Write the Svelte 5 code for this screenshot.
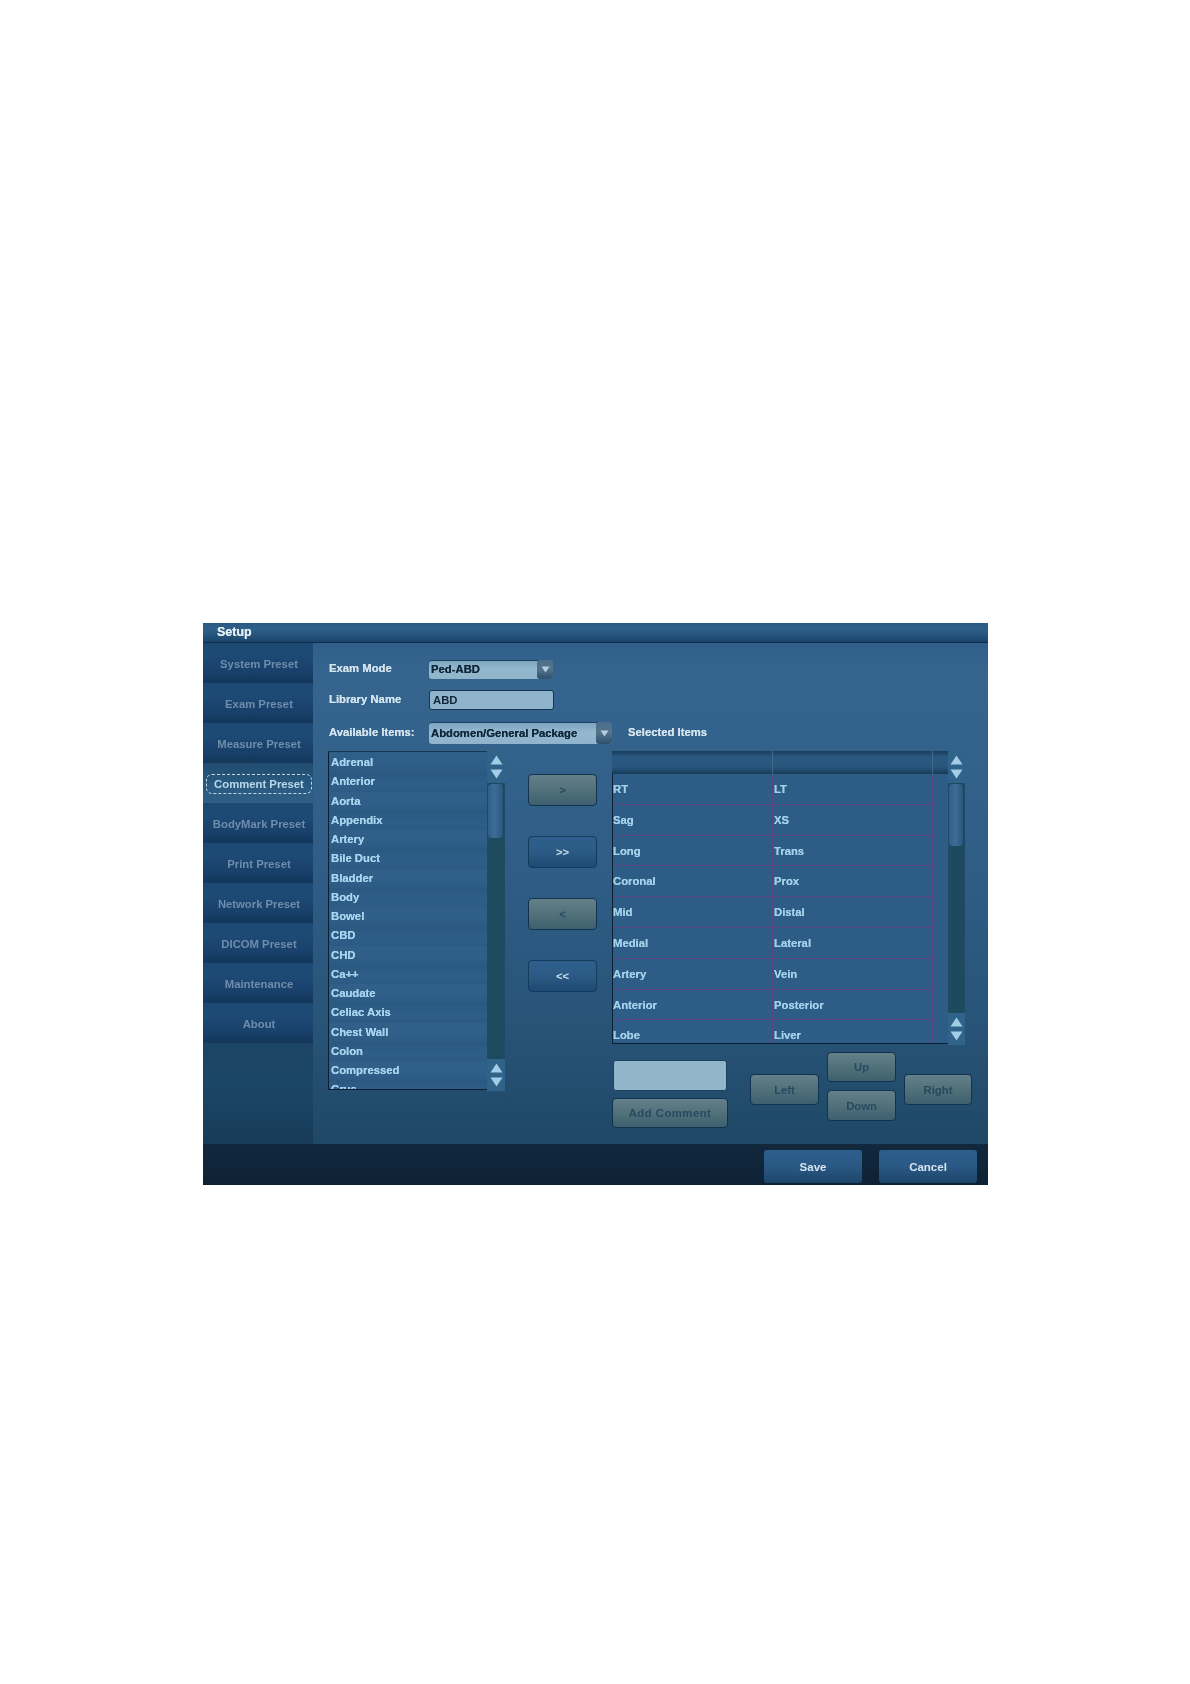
<script lang="ts">
  const NAV = [
    'System Preset',
    'Exam Preset',
    'Measure Preset',
    'Comment Preset',
    'BodyMark Preset',
    'Print Preset',
    'Network Preset',
    'DICOM Preset',
    'Maintenance',
    'About'
  ];

  const AVAILABLE = [
    'Adrenal', 'Anterior', 'Aorta', 'Appendix', 'Artery', 'Bile Duct', 'Bladder', 'Body', 'Bowel',
    'CBD', 'CHD', 'Ca++', 'Caudate', 'Celiac Axis', 'Chest Wall', 'Colon', 'Compressed', 'Crus'
  ];

  const SELECTED = [
    ['RT', 'LT'],
    ['Sag', 'XS'],
    ['Long', 'Trans'],
    ['Coronal', 'Prox'],
    ['Mid', 'Distal'],
    ['Medial', 'Lateral'],
    ['Artery', 'Vein'],
    ['Anterior', 'Posterior'],
    ['Lobe', 'Liver']
  ];

  const TRANSFER = [
    { label: '>', enabled: false },
    { label: '>>', enabled: true },
    { label: '<', enabled: false },
    { label: '<<', enabled: true }
  ];

  let active = $state('Comment Preset');
</script>

{#snippet arrows()}
  <div class="sb-btn">
    <svg width="13" height="10" viewBox="0 0 13 10"><path d="M6.5 .5 L12.5 9.5 H.5 Z" /></svg>
    <svg width="13" height="10" viewBox="0 0 13 10"><path d="M.5 .5 H12.5 L6.5 9.5 Z" /></svg>
  </div>
{/snippet}

{#snippet scrollbar(thumb: number)}
  <div class="scrollbar">
    {@render arrows()}
    <div class="track">
      <div class="thumb" style="height: {thumb}px"></div>
    </div>
    {@render arrows()}
  </div>
{/snippet}

{#snippet comboArrow()}
  <span class="combo-arrow">
    <svg width="9" height="7" viewBox="0 0 9 7"><path d="M.5 .5 H8.5 L4.5 6.5 Z" /></svg>
  </span>
{/snippet}

<div class="setup">
  <div class="titlebar">Setup</div>

  <div class="body">
    <nav class="sidebar">
      {#each NAV as item}
        <button type="button" class="nav-item" class:active={active === item} onclick={() => (active = item)}>
          <span>{item}</span>
        </button>
      {/each}
    </nav>

    <div class="main">
      <div class="row row-exam">
        <span class="label">Exam Mode</span>
        <div class="combo combo-small">
          <span class="combo-text">Ped-ABD</span>
          {@render comboArrow()}
        </div>
      </div>

      <div class="row row-library">
        <span class="label">Library Name</span>
        <input class="field" value="ABD" />
      </div>

      <div class="row row-items">
        <span class="label">Available Items:</span>
        <div class="combo combo-wide">
          <span class="combo-text">Abdomen/General Package</span>
          {@render comboArrow()}
        </div>
        <span class="label selected-label">Selected Items</span>
      </div>

      <div class="workspace">
        <div class="available">
          <ul class="list">
            {#each AVAILABLE as item}
              <li>{item}</li>
            {/each}
          </ul>
          {@render scrollbar(54)}
        </div>

        <div class="transfer">
          {#each TRANSFER as btn}
            <button type="button" class="btn" class:off={!btn.enabled}>{btn.label}</button>
          {/each}
        </div>

        <div class="right">
          <div class="selected">
            <div class="table">
              <div class="thead">
                <span></span>
                <span></span>
                <span></span>
              </div>
              <div class="tbody">
                {#each SELECTED as [a, b]}
                  <div class="tr">
                    <span>{a}</span>
                    <span>{b}</span>
                  </div>
                {/each}
              </div>
            </div>
            {@render scrollbar(62)}
          </div>

          <div class="controls">
            <div class="comment">
              <input class="comment-input" />
              <button type="button" class="btn off add">Add Comment</button>
            </div>
            <div class="pad">
              <button type="button" class="btn off pad-left">Left</button>
              <button type="button" class="btn off pad-up">Up</button>
              <button type="button" class="btn off pad-down">Down</button>
              <button type="button" class="btn off pad-right">Right</button>
            </div>
          </div>
        </div>
      </div>
    </div>
  </div>

  <div class="footer">
    <button type="button" class="btn foot save">Save</button>
    <button type="button" class="btn foot cancel">Cancel</button>
  </div>
</div>

<style>
  :global(body) {
    background: #fff;
  }

  .setup {
    width: 785px;
    height: 562px;
    margin: 623px 0 0 203px;
    display: flex;
    flex-direction: column;
    font-family: 'Liberation Sans', Arial, sans-serif;
    font-size: 11.3px;
    font-weight: 700;
    text-shadow: 0 0 0.5px currentColor;
    filter: blur(0.4px);
  }

  .titlebar {
    height: 19px;
    padding-left: 14px;
    line-height: 18px;
    font-size: 12.5px;
    color: #e6eff5;
    background: linear-gradient(#2a5b85, #2e5f88 35%, #214e75 80%, #1b4468);
    border-bottom: 1px solid #102c47;
    flex: none;
  }

  .body {
    display: flex;
    flex: 1;
    min-height: 0;
  }

  .sidebar {
    width: 110px;
    flex: none;
    display: flex;
    flex-direction: column;
    background: linear-gradient(#173b60, #1a4163 70%, #1c4666 88%, #173b59);
  }

  .nav-item {
    height: 40px;
    flex: none;
    padding: 2px 1px 0 3px;
    border: 0;
    background: linear-gradient(#1c4874, #1e4a76 30%, #18406a 72%, #14375a);
    color: #6f8dab;
    font: inherit;
    cursor: pointer;
    display: flex;
    align-items: center;
    justify-content: center;
  }

  .nav-item span {
    width: 100%;
    height: 20px;
    line-height: 18px;
    border: 1px dashed transparent;
    border-radius: 6px;
    box-sizing: border-box;
  }

  .nav-item.active {
    background: linear-gradient(#1f4c70, #2a5a80 55%, #2f5f85);
    color: #bcd8ea;
  }

  .nav-item.active span {
    border-color: #c2d8e6;
  }

  .main {
    flex: 1;
    padding: 17px 0 0 15px;
    background: linear-gradient(#2f5f8a, #35658f 6%, #2f5d86 45%, #285478 75%, #1f4866);
    color: #d5e5ee;
  }

  .row {
    display: flex;
    align-items: center;
  }

  .row-exam {
    height: 19px;
  }

  .row-library {
    height: 20px;
    margin-top: 11px;
  }

  .row-items {
    height: 22px;
    margin-top: 12px;
  }

  .label {
    width: 100px;
    padding: 0 0 3px 1px;
    box-sizing: border-box;
    flex: none;
  }

  .selected-label {
    width: auto;
    margin-left: 16px;
    padding: 0 0 2px;
  }

  .combo {
    height: 100%;
    margin-left: 1px;
    display: flex;
    align-items: center;
    justify-content: space-between;
    padding-left: 2px;
    box-sizing: border-box;
    color: #10273a;
    background: linear-gradient(#7ea5bf, #94b9cf 45%, #8fb4cb);
    border-top: 1px solid #1a3f60;
    border-radius: 3px;
  }

  .combo-text {
    padding-bottom: 2px;
  }

  .combo-small {
    width: 124px;
  }

  .combo-wide {
    width: 183px;
  }

  .combo-arrow {
    width: 16px;
    align-self: stretch;
    margin-top: -1px;
    display: flex;
    align-items: center;
    justify-content: center;
    background: linear-gradient(#4b6f8c, #54738b 50%, #2c4f6c);
    border-radius: 3px;
  }

  .combo-arrow path {
    fill: #b4d0e0;
  }

  .field {
    width: 125px;
    height: 100%;
    margin: 0 0 0 1px;
    padding: 0 3px 1px;
    box-sizing: border-box;
    font: inherit;
    color: #10273a;
    background: #8fb4cb;
    border: 1px solid #133455;
    border-radius: 3px;
    outline: none;
  }

  .workspace {
    display: flex;
    align-items: flex-start;
    margin-top: 7px;
  }

  .available {
    display: flex;
    width: 177px;
    height: 340px;
    flex: none;
  }

  .list {
    width: 159px;
    height: 339px;
    flex: none;
    margin: 0;
    padding: 1px 0 0 2px;
    box-sizing: border-box;
    list-style: none;
    overflow: hidden;
    color: #a9d4ee;
    background: #2d5c86;
    border-left: 1px solid #0b1f33;
    border-bottom: 1px solid #0b1f33;
    border-top: 1px solid #173753;
  }

  .list li {
    height: 19.25px;
    line-height: 18px;
    padding-left: 1px;
    margin-left: -2px;
    padding-left: 2px;
  }

  .list li:nth-child(even) {
    background: linear-gradient(#2a5881, #2e5e88 60%, #2c5a84);
  }

  .list li:nth-child(odd) {
    background: linear-gradient(#305f89, #2f5f89 60%, #2b5a83);
  }

  .scrollbar {
    width: 18px;
    flex: none;
    display: flex;
    flex-direction: column;
    height: 100%;
  }

  .selected .scrollbar {
    width: 17px;
  }

  .sb-btn {
    height: 32px;
    flex: none;
    display: flex;
    flex-direction: column;
    align-items: center;
    justify-content: center;
    gap: 4px;
    background: #2f6389;
  }

  .sb-btn path {
    fill: #a3cde6;
  }

  .track {
    flex: 1;
    background: linear-gradient(90deg, #1f4a62, #1c4a5c 50%, #1f4a62);
    padding: 1px 1px 0;
  }

  .thumb {
    background: linear-gradient(90deg, #2e5f88, #3d6d96 45%, #28577e);
    border-radius: 4px;
    border-right: 1px solid #1d4660;
  }

  .transfer {
    width: 69px;
    flex: none;
    margin: 23px 0 0 23px;
    display: flex;
    flex-direction: column;
    gap: 30px;
  }

  .btn {
    padding: 0;
    height: 32px;
    font: inherit;
    color: #c9deec;
    background: linear-gradient(#2e5f8c, #2b5a85 50%, #1d4a72);
    border: 1px solid #143a5c;
    border-radius: 4px;
    cursor: pointer;
  }

  .btn.off {
    color: #264a60;
    background: linear-gradient(#648089, #4f6f79 55%, #3e5f6e);
    border-color: #123350;
  }

  .right {
    width: 353px;
    margin-left: 15px;
    flex: none;
  }

  .selected {
    display: flex;
    height: 294px;
  }

  .table {
    width: 336px;
    height: 293px;
    flex: none;
    display: flex;
    flex-direction: column;
    overflow: hidden;
    box-sizing: border-box;
  }

  .thead {
    height: 23px;
    flex: none;
    display: grid;
    grid-template-columns: 161px 160px 1fr;
    background: linear-gradient(#183d5c, #2a5880 25%, #28567c 70%, #173a58);
  }

  .thead span {
    border-right: 1px solid #3f6a8e;
  }

  .thead span:last-child {
    border-right: 0;
  }

  .tbody {
    flex: 1;
    min-height: 0;
    overflow: hidden;
    background: #2d5c86;
    color: #a3d0ea;
    border-left: 1px solid #0b1f33;
    border-bottom: 1px solid #0b1f33;
  }

  .tr {
    height: 30.8px;
    box-sizing: border-box;
    display: grid;
    grid-template-columns: 160px 160px;
    border-bottom: 1px solid #5b4580;
    margin-right: 14px;
  }

  .tr span {
    line-height: 30px;
    border-right: 1px solid #5b4580;
  }

  .tr span:last-child {
    padding-left: 1px;
  }

  .controls {
    display: flex;
    margin-top: 7px;
  }

  .comment {
    width: 116px;
    flex: none;
    margin-top: 8px;
    display: flex;
    flex-direction: column;
    gap: 7px;
  }

  .comment-input {
    width: 114px;
    height: 31px;
    margin-left: 1px;
    padding: 0;
    box-sizing: border-box;
    background: #92b5c9;
    border: 1px solid #1a4261;
    border-radius: 3px;
    outline: none;
  }

  .add {
    height: 30px;
    letter-spacing: 0.5px;
  }

  .pad {
    margin-left: 22px;
    display: grid;
    grid-template-columns: 69px 69px 68px;
    grid-template-rows: 30px 31px;
    gap: 8px;
  }

  .pad .btn {
    height: auto;
  }

  .pad-left {
    grid-column: 1;
    grid-row: 1 / 3;
    margin-top: 22px;
    margin-bottom: 16px;
  }

  .pad-up {
    grid-column: 2;
    grid-row: 1;
  }

  .pad-down {
    grid-column: 2;
    grid-row: 2;
  }

  .pad-right {
    grid-column: 3;
    grid-row: 1 / 3;
    margin-top: 22px;
    margin-bottom: 16px;
  }

  .footer {
    height: 41px;
    flex: none;
    padding: 6px 11px 0 0;
    box-sizing: border-box;
    display: flex;
    justify-content: flex-end;
    align-items: flex-start;
    gap: 17px;
    background: linear-gradient(#11283d, #0e2235);
  }

  .foot {
    height: 33px;
    color: #d5e5ee;
    background: linear-gradient(#2d5f8c, #2a5884 50%, #1c4569);
    border: 0;
    border-radius: 3px;
    font-size: 11.5px;
  }

  .save {
    width: 98px;
  }

  .cancel {
    width: 98px;
  }
</style>
